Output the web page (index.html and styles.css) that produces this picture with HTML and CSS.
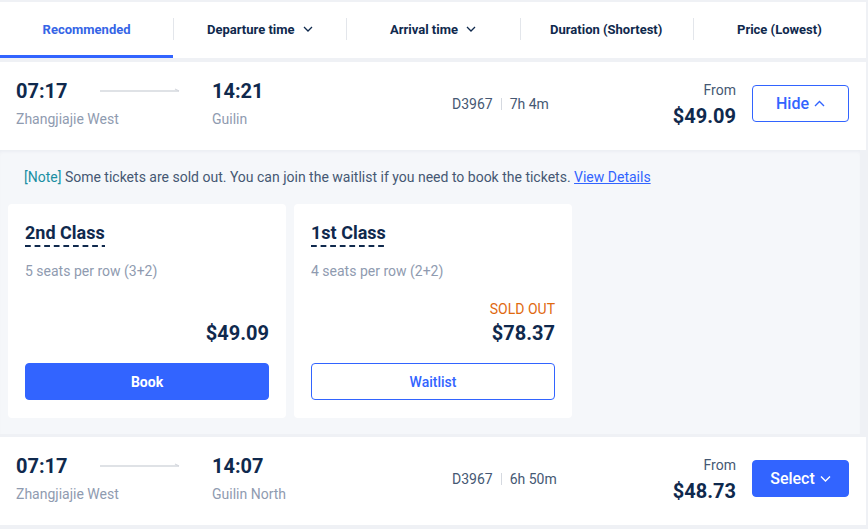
FILE: index.html
```html
<!DOCTYPE html>
<html lang="en">
<head>
<meta charset="utf-8">
<title>Train results</title>
<link rel="stylesheet" href="styles.css">
</head>
<body>
<div class="page">
  <div class="tabs">
    <div class="tab active"><span>Recommended</span></div>
    <div class="tab"><span>Departure time</span><svg class="chev" width="10" height="6" viewBox="0 0 10 6"><polyline points="1,1 5,5 9,1" fill="none" stroke="currentColor" stroke-width="1.3"/></svg></div>
    <div class="tab"><span>Arrival time</span><svg class="chev" width="10" height="6" viewBox="0 0 10 6"><polyline points="1,1 5,5 9,1" fill="none" stroke="currentColor" stroke-width="1.3"/></svg></div>
    <div class="tab"><span>Duration (Shortest)</span></div>
    <div class="tab"><span>Price (Lowest)</span></div>
  </div>

  <div class="result">
    <div class="row">
      <div class="times">
        <div class="time t1">07:17</div>
        <div class="arrow"><svg width="80" height="6" viewBox="0 0 80 6"><line x1="0" y1="3" x2="79" y2="3" stroke="#d5d8de" stroke-width="1.5"/><polyline points="75,1 79,3" fill="none" stroke="#d5d8de" stroke-width="1.2"/></svg></div>
        <div class="time t2">14:21</div>
        <div class="station s1">Zhangjiajie West</div>
        <div class="station s2">Guilin</div>
      </div>
      <div class="info">D3967<span class="sep"></span>7h 4m</div>
      <div class="price-box">
        <div class="from">From</div>
        <div class="price">$49.09</div>
      </div>
      <button class="btn-outline btn-toggle">Hide<svg width="11" height="7" viewBox="0 0 11 7"><polyline points="1,6 5.5,1.5 10,6" fill="none" stroke="currentColor" stroke-width="1.4"/></svg></button>
    </div>
    <div class="detail">
      <p class="note"><span class="note-tag">[Note]</span> Some tickets are sold out. You can join the waitlist if you need to book the tickets. <a href="#" class="link">View Details</a></p>
      <div class="classes">
        <div class="class-card">
          <div class="class-name"><span>2nd Class</span></div>
          <div class="seats">5 seats per row (3+2)</div>
          <div class="class-price">
            <div class="cp">$49.09</div>
          </div>
          <button class="btn-fill btn-wide">Book</button>
        </div>
        <div class="class-card">
          <div class="class-name"><span>1st Class</span></div>
          <div class="seats">4 seats per row (2+2)</div>
          <div class="class-price">
            <div class="sold">SOLD OUT</div>
            <div class="cp">$78.37</div>
          </div>
          <button class="btn-outline btn-wide">Waitlist</button>
        </div>
      </div>
    </div>
  </div>

  <div class="result second">
    <div class="row">
      <div class="times">
        <div class="time t1">07:17</div>
        <div class="arrow"><svg width="80" height="6" viewBox="0 0 80 6"><line x1="0" y1="3" x2="79" y2="3" stroke="#d5d8de" stroke-width="1.5"/><polyline points="75,1 79,3" fill="none" stroke="#d5d8de" stroke-width="1.2"/></svg></div>
        <div class="time t2">14:07</div>
        <div class="station s1">Zhangjiajie West</div>
        <div class="station s2">Guilin North</div>
      </div>
      <div class="info">D3967<span class="sep"></span>6h 50m</div>
      <div class="price-box">
        <div class="from">From</div>
        <div class="price">$48.73</div>
      </div>
      <button class="btn-fill btn-toggle">Select<svg width="11" height="7" viewBox="0 0 11 7"><polyline points="1,1.5 5.5,6 10,1.5" fill="none" stroke="currentColor" stroke-width="1.4"/></svg></button>
    </div>
  </div>
</div>
</body>
</html>
```

FILE: styles.css
```css
* { box-sizing: border-box; }
html, body { margin: 0; padding: 0; }
body {
  background: #eff1f5;
  font-family: Roboto, "Noto Sans", Arial, sans-serif;
  color: #0f294d;
  width: 868px;
  height: 529px;
  overflow: hidden;
}
.page { padding-top: 2px; }

/* tabs */
.tabs {
  display: grid;
  grid-template-columns: repeat(5, 1fr);
  background: #fff;
  height: 56px;
  margin-right: 2px;
}
.tab {
  display: flex;
  align-items: center;
  justify-content: center;
  gap: 8px;
  font-size: 13px;
  font-weight: 700;
  color: #0f294d;
  position: relative;
  border-bottom: 3px solid transparent;
  padding-top: 2px;
}
.tab + .tab::before {
  content: "";
  position: absolute;
  left: 0;
  top: 16px;
  height: 22px;
  width: 1px;
  background: #e3e6eb;
}
.tab.active { color: #3565e6; border-bottom-color: #3264ff; }
.chev { color: #0f294d; margin-top: -1px; }

/* result cards */
.result { margin-top: 4px; }
.result.second { margin-top: 3px; }
.row {
  display: flex;
  align-items: center;
  background: #fff;
  height: 88px;
  padding: 0 17px 0 16px;
  margin-right: 2px;
}
.times {
  display: grid;
  grid-template-columns: 84px 80px 32px auto;
  grid-template-rows: 24px 20px;
  row-gap: 6px;
  width: 436px;
  align-self: flex-start;
  padding-top: 17px;
}
.time { font-size: 20px; font-weight: 700; line-height: 24px; color: #0f294d; }
.t1 { grid-column: 1; grid-row: 1; }
.arrow { grid-column: 2; grid-row: 1; display: flex; align-items: center; }
.arrow svg { display: block; }
.t2 { grid-column: 4; grid-row: 1; }
.station { font-size: 14px; line-height: 20px; color: #8f9bb0; }
.s1 { grid-column: 1 / span 3; grid-row: 2; }
.s2 { grid-column: 4; grid-row: 2; }

.info {
  font-size: 14px;
  color: #455873;
  display: flex;
  align-items: center;
  flex: 1;
  margin-top: -4px;
}
.sep {
  display: inline-block;
  width: 1px;
  height: 12px;
  background: #d5d9e0;
  margin: 0 8px;
}
.price-box {
  text-align: right;
  margin-right: 16px;
  display: flex;
  flex-direction: column;
  gap: 5px;
  margin-top: -3px;
}
.from { font-size: 14px; line-height: 18px; color: #455873; }
.price { font-size: 20px; line-height: 24px; font-weight: 700; color: #0f294d; }

.btn-toggle {
  width: 97px;
  height: 37px;
  font-size: 16px;
  font-weight: 500;
  display: flex;
  align-items: center;
  justify-content: center;
  gap: 5px;
  border-radius: 4px;
  font-family: inherit;
  padding: 0;
  margin-top: -5px;
}
.btn-outline {
  background: #fff;
  color: #3264ff;
  border: 1px solid #3264ff;
  border-radius: 4px;
  font-family: inherit;
}
.btn-fill {
  background: #3264ff;
  color: #fff;
  border: 1px solid #3264ff;
  border-radius: 4px;
  font-family: inherit;
}

/* detail */
.detail {
  background: #f5f7fa;
  padding: 17px 8px 16px 8px;
  box-shadow: inset 0 3px 4px -2px rgba(15, 41, 77, 0.06);
  margin-right: 8px;
}
.note {
  margin: 0 0 17px 16px;
  font-size: 14px;
  line-height: 20px;
  color: #455873;
}
.note-tag { color: #1a8fa3; }
.link { color: #3264ff; text-decoration: underline; }
.classes {
  display: grid;
  grid-template-columns: 278px 278px;
  gap: 8px;
}
.class-card {
  background: #fff;
  border-radius: 4px;
  height: 214px;
  padding: 17px 17px 18px;
  display: flex;
  flex-direction: column;
}
.class-name {
  font-size: 18px;
  line-height: 24px;
  font-weight: 700;
  color: #0f294d;
}
.class-name span {
  display: inline-block;
  background-image: linear-gradient(to right, #0f294d 0 6px, transparent 6px 9.6px);
  background-size: 9.6px 2px;
  background-repeat: repeat-x;
  background-position: left bottom 0;
  line-height: 24px;
  padding-bottom: 2px;
}
.seats {
  margin-top: 14px;
  font-size: 14px;
  line-height: 20px;
  color: #8f9bb0;
}
.class-price {
  margin-top: auto;
  text-align: right;
  display: flex;
  flex-direction: column;
  gap: 2px;
}
.sold { font-size: 14px; line-height: 18px; color: #e0690f; }
.cp { font-size: 20px; line-height: 26px; font-weight: 700; color: #0f294d; }
.btn-wide {
  margin-top: 17px;
  height: 37px;
  width: 100%;
  font-size: 14px;
  font-weight: 500;
}
.btn-fill.btn-wide { font-weight: 700; }
```
